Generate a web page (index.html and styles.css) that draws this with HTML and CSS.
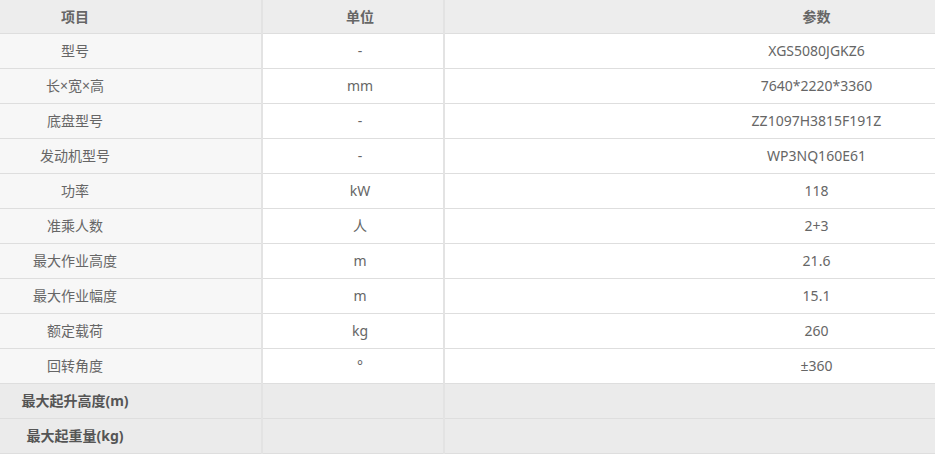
FILE: index.html
```html
<!DOCTYPE html>
<html lang="zh">
<head>
<meta charset="utf-8">
<link rel="stylesheet" href="styles.css">
</head>
<body>
<table class="spec">
  <thead>
    <tr class="head"><th class="c1">项目</th><th class="c2">单位</th><th class="c3">参数</th></tr>
  </thead>
  <tbody>
    <tr><td class="c1">型号</td><td class="c2">-</td><td class="c3">XGS5080JGKZ6</td></tr>
    <tr><td class="c1">长×宽×高</td><td class="c2">mm</td><td class="c3">7640*2220*3360</td></tr>
    <tr><td class="c1">底盘型号</td><td class="c2">-</td><td class="c3">ZZ1097H3815F191Z</td></tr>
    <tr><td class="c1">发动机型号</td><td class="c2">-</td><td class="c3">WP3NQ160E61</td></tr>
    <tr><td class="c1">功率</td><td class="c2">kW</td><td class="c3">118</td></tr>
    <tr><td class="c1">准乘人数</td><td class="c2">人</td><td class="c3">2+3</td></tr>
    <tr><td class="c1">最大作业高度</td><td class="c2">m</td><td class="c3">21.6</td></tr>
    <tr><td class="c1">最大作业幅度</td><td class="c2">m</td><td class="c3">15.1</td></tr>
    <tr><td class="c1">额定载荷</td><td class="c2">kg</td><td class="c3">260</td></tr>
    <tr><td class="c1">回转角度</td><td class="c2">°</td><td class="c3">±360</td></tr>
    <tr class="sub"><td class="c1">最大起升高度(m)</td><td class="c2"></td><td class="c3"></td></tr>
    <tr class="sub"><td class="c1">最大起重量(kg)</td><td class="c2"></td><td class="c3"></td></tr>
  </tbody>
</table>
</body>
</html>
```

FILE: styles.css
```css
html, body {
  margin: 0;
  padding: 0;
  background: #fff;
}
.spec {
  border-collapse: collapse;
  width: 935px;
  table-layout: fixed;
  font-family: "Noto Sans", "Noto Sans CJK SC", sans-serif;
  font-size: 14px;
  color: #666;
}
.spec th, .spec td {
  padding: 0;
  text-align: center;
  vertical-align: middle;
  border-bottom: 1px solid #dedede;
  line-height: 20px;
  white-space: nowrap;
}
.spec th {
  font-weight: bold;
  color: #666;
  background: #ededed;
  height: 33px;
}
.spec td {
  height: 34px;
}
.spec .c1 {
  width: 150px;
  padding-right: 111px;
  border-right: 2px solid #e3e3e3;
}
.spec .c2 {
  width: 182px;
  padding-left: 14px;
  box-sizing: border-box;
  border-right: 2px solid #e3e3e3;
}
.spec .c3 {
  padding-left: 253px;
}
.spec tbody .c1 {
  background: #f7f7f7;
}
.spec .sub td {
  background: #ebebeb;
  font-weight: bold;
  color: #555;
}
```
